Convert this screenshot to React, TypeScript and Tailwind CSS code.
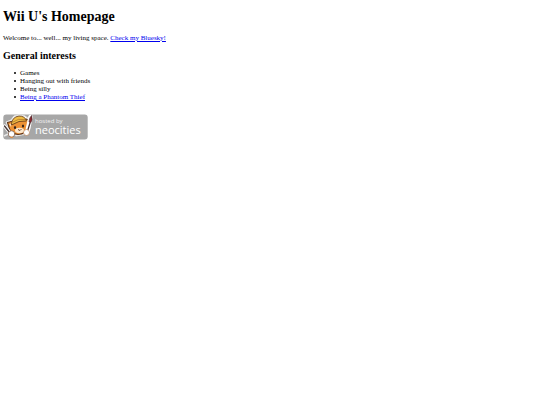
const interests = ["Games", "Hanging out with friends", "Being silly"];

const itemClass =
  "flex items-center gap-1 before:size-[2px] before:rounded-full before:bg-black before:content-['']";

function NeocitiesBadge() {
  return (
    <svg width="85" height="26" viewBox="0 0 85 26" className="block" role="img" aria-label="Hosted by Neocities">
      <rect x="0.3" y="0.4" width="84.4" height="25" rx="3" fill="#a7a7a7" />

      {/* cat */}
      <path d="M3 8 L8 6 L11 2 L16 0.8 L22 2 L26 5 L27 14 L24 20 L13 22 L7 18 Z" fill="#fff" stroke="#e4e4e4" strokeWidth="1" strokeLinejoin="round" />
      <path d="M4.500 8.500 L10 7 L23 5 L26 6 L25.500 13 Q23 20 15 20.500 Q8 20 6.500 15 Z" fill="#ed9234" stroke="#5b3217" strokeWidth="1.100" strokeLinejoin="round" />
      <path d="M6 10 L9 9.500 L8 13 Z" fill="#fbd9b0" />
      <path d="M8.500 10 Q9 3 16 2 Q22 2 23.500 7 Q16 6 8.500 11 Z" fill="#f0bd45" stroke="#6b431d" strokeWidth="0.9" />
      <path d="M10 8 Q15 4 22 5.500" fill="none" stroke="#a86f25" strokeWidth="0.7" />
      <ellipse cx="16.500" cy="16.500" rx="4.500" ry="2.800" fill="#fbe6cb" />
      <ellipse cx="12" cy="13.500" rx="1.100" ry="1.600" fill="#35251c" />
      <ellipse cx="20" cy="12" rx="1.100" ry="1.600" fill="#35251c" />
      <path d="M15 15.500 L17 16.500 L18.500 15" fill="none" stroke="#613721" strokeWidth="0.9" />

      {/* left brush and paw */}
      <path d="M1.500 12 L8 20" stroke="#fff" strokeWidth="3.500" strokeLinecap="round" />
      <path d="M1.500 12 L7 19" stroke="#493b3b" strokeWidth="1.400" strokeLinecap="round" />
      <path d="M1 22 L5 20" stroke="#e8e8e8" strokeWidth="1.500" />
      <circle cx="8.500" cy="20" r="3.200" fill="#fff" stroke="#75513b" strokeWidth="0.7" />
      <path d="M7 23 L10 23.500" stroke="#e78e3c" strokeWidth="1" />

      {/* right brush and paw */}
      <path d="M27.500 3 L24.500 17" stroke="#fff" strokeWidth="4.500" strokeLinecap="round" />
      <path d="M27 9 L24.500 17" stroke="#4a302d" strokeWidth="1.300" />
      <path d="M28.500 1.500 Q30 6 27.500 9 L26 8 Q26 4 28.500 1.500 Z" fill="#8d2932" stroke="#402629" strokeWidth="0.6" />
      <circle cx="23.500" cy="18.500" r="3" fill="#fff" stroke="#b97944" strokeWidth="0.6" />

      <g fontFamily="'Open Sans', sans-serif">
        <text x="32" y="9" fontSize="6" fill="#f1f1f1">hosted by</text>
        <text x="32" y="20" fontSize="11" fill="#fff">neocities</text>
      </g>
    </svg>
  );
}

export default function App() {
  return (
    <main className="bg-white px-[3px] pt-2 font-['Liberation_Serif',serif] text-[7px] leading-[8px] text-black">
      <h1 className="text-[14px] leading-[18px] font-bold">Wii U's Homepage</h1>
      <p className="mt-2">
        Welcome to... well... my living space.{" "}
        <a href="#bluesky" className="text-[#0000ee] underline">Check my Bluesky!</a>
      </p>
      <h2 className="mt-2 text-[10px] leading-3 font-bold">General interests</h2>
      <ul className="mt-[7px] pl-[11px]">
        {interests.map((item) => (
          <li key={item} className={itemClass}>{item}</li>
        ))}
        <li className={itemClass}>
          <a href="#thief" className="text-[#0000ee] underline">Being a Phantom Thief</a>
        </li>
      </ul>
      <a href="#neocities" className="mt-[13px] inline-block">
        <NeocitiesBadge />
      </a>
    </main>
  );
}
